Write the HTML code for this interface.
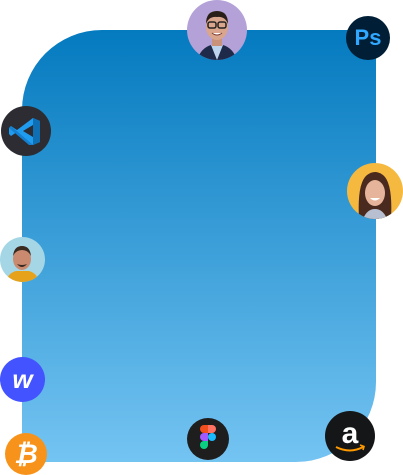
<!DOCTYPE html>
<html><head><style>
html,body{margin:0;padding:0;background:#fff;width:403px;height:475px;overflow:hidden;position:relative;font-family:"Liberation Sans",sans-serif}
.card{position:absolute;left:22px;top:30px;width:354px;height:432px;border-radius:80px 0 80px 0;background:linear-gradient(#047abf,#74c4f2)}
.c{position:absolute;border-radius:50%;overflow:hidden}
svg{display:block}
</style></head><body>
<div class="card"></div>

<!-- man top -->
<div class="c" style="left:187px;top:0;width:60px;height:60px;background:#b3a1d8">
<svg width="60" height="60" viewBox="0 0 60 60">
<path d="M10 60 Q14 48 24 45 L36 45 Q46 48 50 60Z" fill="#1f2a4a"/>
<path d="M24 45 L30 60 L36 45Z" fill="#bcd4ee"/>
<rect x="25" y="36" width="10" height="10" fill="#c9927a"/>
<ellipse cx="30" cy="27" rx="11" ry="13" fill="#d9a58c"/>
<path d="M19 24 Q19 11 30 11 Q41 11 41 24 Q38 16 30 17 Q22 16 19 24Z" fill="#2a1e18"/>
<rect x="21" y="22" width="8" height="6" rx="2" fill="none" stroke="#222" stroke-width="1.5"/>
<rect x="31" y="22" width="8" height="6" rx="2" fill="none" stroke="#222" stroke-width="1.5"/>
<path d="M25 33 Q30 37 35 33" fill="#fff" stroke="#7a3a30" stroke-width="1"/>
</svg></div>

<!-- Ps -->
<div class="c" style="left:346px;top:16px;width:44px;height:44px;background:#001e36;color:#31a8ff;font-weight:bold;font-size:22px;line-height:44px;text-align:center">Ps</div>

<!-- VS code -->
<div class="c" style="left:1px;top:106px;width:50px;height:50px;background:#2c2c32">
<svg width="50" height="50" viewBox="0 0 50 50">
<path d="M32 12 L39 15 L39 36 L32 39 L16 26 L10 30 L8 28 L8 22 L10 20 L16 24Z" fill="#1f9cf0"/>
<path d="M32 12 L32 39 L39 36 L39 15Z" fill="#0f6fb5"/>
<path d="M32 19 L32 31 L22 25Z" fill="#2c2c32"/>
<path d="M10 20 L32 39 L28 39 L8 22Z" fill="#1580d0"/>
</svg></div>

<!-- woman -->
<div class="c" style="left:347px;top:163px;width:56px;height:56px;background:#f6b940">
<svg width="56" height="56" viewBox="0 0 56 56">
<path d="M12 56 Q10 20 20 12 Q28 6 36 12 Q46 20 44 56Z" fill="#4a2a1e"/>
<path d="M16 56 Q20 46 28 46 Q36 46 40 56Z" fill="#b8bfd0"/>
<ellipse cx="28" cy="30" rx="10" ry="13" fill="#e6b49a"/>
<path d="M23 35 Q28 40 33 35Z" fill="#fff"/>
</svg></div>

<!-- man left -->
<div class="c" style="left:0;top:237px;width:45px;height:45px;background:#a4d6e6">
<svg width="45" height="45" viewBox="0 0 45 45">
<path d="M6 45 Q8 36 16 34 L29 34 Q37 36 39 45Z" fill="#e6a21a"/>
<ellipse cx="22" cy="22" rx="9" ry="11" fill="#c98a70"/>
<path d="M13 19 Q14 9 22 9 Q30 9 31 19 Q28 13 22 13 Q16 13 13 19Z" fill="#3a2a20"/>
<path d="M17 27 Q22 33 27 27 Q22 29 17 27Z" fill="#3a2a20"/>
</svg></div>

<!-- webflow -->
<div class="c" style="left:0;top:357px;width:45px;height:45px;background:#4353ff;color:#fff;font-weight:bold;font-style:italic;font-size:26px;line-height:44px;text-align:center">w</div>

<!-- bitcoin -->
<div class="c" style="left:5px;top:433px;width:42px;height:42px;background:#f7931a;color:#fff;font-weight:bold;font-style:italic;font-size:27px;line-height:42px;text-align:center;transform:rotate(0deg)">₿</div>

<!-- figma -->
<div class="c" style="left:187px;top:418px;width:42px;height:42px;background:#1e1e1e">
<svg width="42" height="42" viewBox="0 0 42 42">
<path d="M13 11 a4 4 0 0 1 4-4 h4 v8 h-4 a4 4 0 0 1 -4-4Z" fill="#f24e1e"/>
<path d="M21 7 h4 a4 4 0 0 1 0 8 h-4Z" fill="#ff7262"/>
<path d="M13 19 a4 4 0 0 1 4-4 h4 v8 h-4 a4 4 0 0 1 -4-4Z" fill="#a259ff"/>
<circle cx="25" cy="19" r="4" fill="#1abcfe"/>
<path d="M13 27 a4 4 0 0 1 4-4 h4 v4 a4 4 0 0 1 -8 0Z" fill="#0acf83"/>
</svg></div>

<!-- amazon -->
<div class="c" style="left:325px;top:411px;width:50px;height:50px;background:#151618">
<svg width="50" height="50" viewBox="0 0 50 50">
<text x="25" y="32" text-anchor="middle" font-family="Liberation Sans" font-weight="bold" font-size="30" fill="#fff">a</text>
<path d="M11 36 Q25 43 38 36" fill="none" stroke="#f90" stroke-width="2"/>
<path d="M35 34 L39 35.5 L38 39" fill="none" stroke="#f90" stroke-width="1.6"/>
</svg></div>
</body></html>
